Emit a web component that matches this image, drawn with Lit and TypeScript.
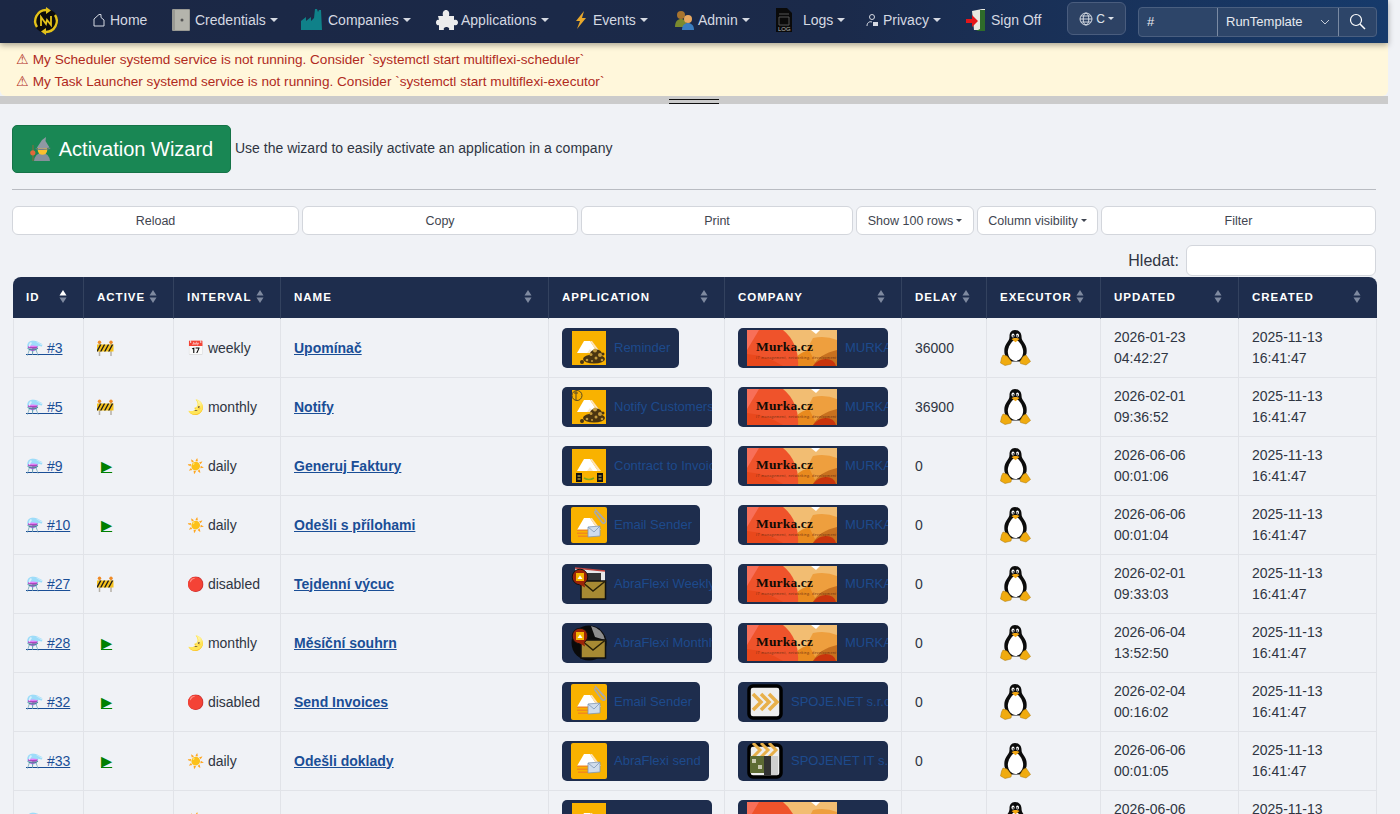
import { LitElement, html, css, svg } from 'lit';
import { customElement } from 'lit/decorators.js';

type Row = {
  id: number; active: boolean; interval: string; name: string;
  app: string; appIcon: string; appW: number;
  company: string; companyIcon: string;
  delay: string; updated: string[];
};

const MURKA = 'MURKA.CZ';
const rows: Row[] = [
  { id: 3, active: false, interval: 'weekly', name: 'Upomínač', app: 'Reminder', appIcon: 'coins', appW: 117, company: MURKA, companyIcon: 'murka', delay: '36000', updated: ['2026-01-23', '04:42:27'] },
  { id: 5, active: false, interval: 'monthly', name: 'Notify', app: 'Notify Customers', appIcon: 'notify', appW: 150, company: MURKA, companyIcon: 'murka', delay: '36900', updated: ['2026-02-01', '09:36:52'] },
  { id: 9, active: true, interval: 'daily', name: 'Generuj Faktury', app: 'Contract to Invoice', appIcon: 'contract', appW: 150, company: MURKA, companyIcon: 'murka', delay: '0', updated: ['2026-06-06', '00:01:06'] },
  { id: 10, active: true, interval: 'daily', name: 'Odešli s přílohami', app: 'Email Sender', appIcon: 'clip', appW: 138, company: MURKA, companyIcon: 'murka', delay: '0', updated: ['2026-06-06', '00:01:04'] },
  { id: 27, active: false, interval: 'disabled', name: 'Tejdenní výcuc', app: 'AbraFlexi Weekly', appIcon: 'weekly', appW: 150, company: MURKA, companyIcon: 'murka', delay: '0', updated: ['2026-02-01', '09:33:03'] },
  { id: 28, active: true, interval: 'monthly', name: 'Měsíční souhrn', app: 'AbraFlexi Monthly', appIcon: 'monthly', appW: 150, company: MURKA, companyIcon: 'murka', delay: '0', updated: ['2026-06-04', '13:52:50'] },
  { id: 32, active: true, interval: 'disabled', name: 'Send Invoices', app: 'Email Sender', appIcon: 'clip', appW: 138, company: 'SPOJE.NET s.r.o.', companyIcon: 'spoje', delay: '0', updated: ['2026-02-04', '00:16:02'] },
  { id: 33, active: true, interval: 'daily', name: 'Odešli doklady', app: 'AbraFlexi send', appIcon: 'send', appW: 147, company: 'SPOJENET IT s.r.o.', companyIcon: 'spojeit', delay: '0', updated: ['2026-06-06', '00:01:05'] },
  { id: 34, active: true, interval: 'daily', name: 'Import', app: 'AbraFlexi Import', appIcon: 'coins', appW: 150, company: MURKA, companyIcon: 'murka', delay: '0', updated: ['2026-06-06', '00:01:03'] },
];

const intervalEmoji: Record<string, string> = { weekly: '📅', monthly: '🌛', daily: '☀️', disabled: '🔴' };

const columns: [string, number][] = [
  ['ID', 71], ['ACTIVE', 90], ['INTERVAL', 107], ['NAME', 268], ['APPLICATION', 176],
  ['COMPANY', 177], ['DELAY', 85], ['EXECUTOR', 114], ['UPDATED', 138], ['CREATED', 138],
];

const abraA = svg`<path d="M6 23 13 11h6l8 12z" fill="#fff"/><path d="M19 11h2l9 12h-3z" fill="#fde3b8"/><path d="M16 23l3-4 3 4z" fill="#fbe9c9"/>`;
const coins = svg`<g fill="#4a3510"><ellipse cx="23" cy="29" rx="11" ry="4.500"/><ellipse cx="25" cy="24" rx="6" ry="4.500"/><circle cx="11" cy="32" r="2"/><circle cx="32" cy="24" r="1.500"/></g><g fill="#c29a3e"><circle cx="24" cy="20.500" r="2"/><circle cx="29" cy="25" r="2"/><circle cx="20" cy="24.500" r="1.500"/><circle cx="25" cy="28" r="1.500"/><circle cx="16" cy="30" r="1.300"/><circle cx="31" cy="30" r="1.300"/><circle cx="21" cy="31" r="1"/></g>`;
const mail = svg`<g fill="#f28a1c"><path d="M6 22.500h11v1.500H6zM6 25.500h11v1.500H6zM7 28.500h10v1.500H7z"/></g><path d="M17 20l12-1 0 10-12 1z" fill="#cfdcec" stroke="#7f97b5" stroke-width=".8"/><path d="M17 20l6 5 6-6" fill="none" stroke="#7f97b5" stroke-width=".8"/>`;
const clip = svg`<path d="M24 2l10 11c1.600 2.500-1.500 4-3 2.500L24 6c-1-1.500 .8-2.500 2-1.500l6 7" fill="none" stroke="#a8a8a8" stroke-width="1.500"/>`;
const envelope = svg`<rect x="10" y="15" width="24.500" height="18" fill="#a78a33" stroke="#111" stroke-width="1.500"/><path d="M10 15l12 10 12.500-10" fill="none" stroke="#2a2208" stroke-width="1.500"/>`;
const bubble = svg`<circle cx="9" cy="11" r="7.800" fill="#9c2408" stroke="#111" stroke-width="1"/><path d="M8 18l6 3.500-1-6z" fill="#9c2408"/><rect x="5" y="7" width="8" height="8" fill="#f5b301"/><path d="M6.500 13l2.500-3.500 2.500 3.500z" fill="#fff"/>`;

function appIcon(kind: string) {
  const square = svg`<rect x="1" y="1" width="34" height="34" fill="#f9b200"/>`;
  let body = svg``;
  if (kind === 'coins') body = svg`${square}${abraA}${coins}`;
  if (kind === 'notify') body = svg`${square}${abraA}${coins}<circle cx="6" cy="6.500" r="5" fill="none" stroke="#5a4a20"/><path d="M5 2v9M3 4h4" stroke="#5a4a20" fill="none"/>`;
  if (kind === 'contract') body = svg`${square}${abraA}<path d="M5 25h6v9H5zM26 25h6v9h-6z" fill="#111"/><path d="M6.500 28h3M6.500 31h3M27.500 28h3M27.500 31h3" stroke="#f5d04a"/><path d="M13 30q5 3 10 0" fill="none" stroke="#7da81e" stroke-width="1.600"/>`;
  if (kind === 'clip') body = svg`<rect x="0" y="0" width="36" height="36" rx="2" fill="#f9b200"/>${abraA}${mail}${clip}`;
  if (kind === 'send') body = svg`<rect x="0" y="0" width="36" height="36" rx="2" fill="#f9b200"/>${abraA}${mail}`;
  if (kind === 'weekly') body = svg`<path d="M4 2l30 3v12H6z" fill="#e8e8e8"/><path d="M4 2l30 3" stroke="#c0453f" stroke-width="1.500"/><path d="M16 7h14v8H16z" fill="#333"/>${envelope}${bubble}`;
  if (kind === 'monthly') body = svg`<circle cx="18" cy="18" r="17.500" fill="#0a0a0a"/><path d="M20 1a17 17 0 0 1 14 14l-10-3z" fill="#8c8c8c"/>${envelope}${bubble}`;
  return html`<svg class="logo" width="36" height="36" viewBox="0 0 36 36">${body}</svg>`;
}

function companyIcon(kind: string) {
  if (kind === 'murka') {
    return html`<svg class="banner" width="90" height="36" viewBox="0 0 90 36">
      <rect width="90" height="36" fill="#f2bd72"/>
      <path d="M66 8a40 40 0 0 1 24 2v26H51z" fill="#ee9f3e"/>
      <path d="M45 36q2-12 17-16l8 16z" fill="#e98a1e"/>
      <path d="M90 20v16H66q6-12 24-16z" fill="#c8711f"/>
      <path d="M66 36q5-7 13-7t10 7z" fill="#c9340c"/>
      <path d="M64 0h9l-4 4z" fill="#fff"/>
      <path d="M0 0h36a36 40 0 0 1 15 36H0z" fill="#ef532b"/>
      <path d="M0 0h12L0 20z" fill="#f86f58"/>
      <path d="M0 36V24q20 2 36 12z" fill="#e9481c"/>
      <text x="9" y="21" class="murka" textLength="57">Murka.cz</text>
      <text x="9" y="29" class="murka-sub" textLength="80">IT management, networking, development</text>
    </svg>`;
  }
  const chevrons = svg`<path d="M6 10l8 8-8 8M14 10l8 8-8 8M22 10l8 8-8 8" fill="none" stroke="#e8b04a" stroke-width="3.500"/>`;
  if (kind === 'spoje') {
    return html`<svg class="square" width="36" height="36" viewBox="0 0 36 36"><rect x="2" y="2" width="32" height="32" rx="4" fill="#eee" stroke="#000" stroke-width="3.500"/>${chevrons}</svg>`;
  }
  return html`<svg class="square" width="36" height="36" viewBox="0 0 36 36">
    <rect x="2" y="2" width="32" height="32" rx="4" fill="#eee" stroke="#000" stroke-width="3.500"/>
    <path d="M6-1l7 7-7 7M14-1l7 7-7 7M22-1l7 7-7 7" transform="translate(0 1)" fill="none" stroke="#e8b04a" stroke-width="3"/>
    <rect x="3" y="13" width="14" height="17" fill="#5d6b33"/><path d="M5 16h4v4H5zM11 22h4v4h-4z" fill="#c9c9b0"/>
    <rect x="17" y="13" width="14" height="19" fill="#cfcfcf"/><rect x="17" y="13" width="7" height="19" fill="#333"/>
  </svg>`;
}

const tux = html`<svg class="tux" width="32" height="38" viewBox="0 0 32 38">
  <path d="M15 1c-4 0-5.500 3-5.500 6.500 0 3-1 4-3 7-2 3-2.500 6-2 10l3 8h16l3-8c.5-4 0-7-2-10-2-3-3-4-3-7C21.500 4 19 1 15 1z" fill="#0c0c0c"/>
  <path d="M15.500 11c-3 0-6.500 5-7.500 10-1 6 3 11 7.500 11s8.500-5 7.500-11c-1-5-4.500-10-7.500-10z" fill="#fff"/>
  <ellipse cx="13" cy="6.500" rx="1.500" ry="2" fill="#fff"/><ellipse cx="17.500" cy="6.500" rx="1.500" ry="2" fill="#fff"/>
  <circle cx="13.300" cy="7" r=".8" fill="#000"/><circle cx="17.200" cy="7" r=".8" fill="#000"/>
  <path d="M11.500 10c2-1.500 6-1.500 8 0l-4 3.200z" fill="#f3a712"/>
  <path d="M3 26l4 1 4.500 5.500-.5 2.500-6 1.500L.5 34l1-5z" fill="#f0ab0f" stroke="#a87408" stroke-width=".5"/>
  <path d="M26 26l-3 1.500-3 5 .5 2 5.500 1.500 4.500-3.500-2-3z" fill="#f0ab0f" stroke="#a87408" stroke-width=".5"/>
</svg>`;

const barrier = html`<svg class="barrier" width="17" height="16" viewBox="0 0 17 16">
  <path d="M2.500 2v14M14 2v14" stroke="#b5b0a6" stroke-width="1.500"/>
  <circle cx="2.500" cy="2.200" r="1.700" fill="#f08a24"/><circle cx="14" cy="2.200" r="1.700" fill="#f08a24"/>
  <rect x="0" y="4.500" width="16.500" height="7" fill="#f6c21c"/>
  <path d="M0 10l3-5.500h1.500L.8 11.500H0zM3 11.500l3.800-7h1.500l-3.800 7zM7 11.500l3.800-7h1.500l-3.800 7zM11 11.500l3.800-7h1.500l-3.800 7z" fill="#1c1c1c"/>
</svg>`;

const wizard = html`<svg class="mage" width="22" height="24" viewBox="0 0 22 24">
  <path d="M4 24q1-8 8-8t8 8z" fill="#87909b"/>
  <path d="M3 8v16" stroke="#8a6a3c" stroke-width="1"/>
  <circle cx="12.500" cy="13" r="4.800" fill="#fbc02d"/>
  <path d="M7 10.500 12 3l4-3-.5 4 4 6.500q-6 2-12.500 .5z" fill="#8f98a3"/>
  <path d="M5.500 11q6.500 2.200 15 -.3l-.5 1.300q-7 2-14 .2z" fill="#737c87"/>
  <circle cx="2.800" cy="15.800" r="2.600" fill="#e2683a"/>
</svg>`;

const caret = html`<span class="caret"></span>`;

@customElement('app-root')
export class AppRoot extends LitElement {
  static styles = css`
    :host {
      display: block;
      height: 814px;
      overflow: hidden;
      background: #f0f2f6;
      font-family: 'Liberation Sans', Arial, sans-serif;
      font-size: 14px;
      color: #2f3542;
    }
    .page { width: 1388px; }
    nav {
      height: 43px;
      box-sizing: border-box;
      display: flex;
      align-items: center;
      padding-left: 31px;
      background: linear-gradient(90deg, #1b2744 0%, #1b2a4a 60%, #163a6b 100%);
      color: #dfe3ea;
      box-shadow: 0 2px 6px rgba(0, 0, 0, .35);
      position: relative;
      z-index: 2;
    }
    .brand { width: 30px; height: 28px; margin: 0 31px 2px 0; }
    .item { display: flex; align-items: center; white-space: nowrap; color: #d5d9e2; margin-bottom: 4px; }
    .item svg { flex: none; }
    .caret {
      display: inline-block;
      margin-left: 4px;
      border-top: 4px solid currentColor;
      border-left: 4px solid transparent;
      border-right: 4px solid transparent;
    }
    .lang {
      display: flex;
      align-items: center;
      justify-content: center;
      box-sizing: border-box;
      width: 59px;
      height: 33px;
      margin: -6px 0 0 13px;
      gap: 3px;
      font-size: 12px;
      border: 1px solid #4a5d7e;
      border-radius: 6px;
      background: #2d4264;
      color: #dfe3ea;
    }
    .lang .caret, .toolbar .caret { border-width: 3px 3px 0; margin-left: 3px; }
    .lang .caret { margin-left: 0; }
    .search {
      display: flex;
      box-sizing: border-box;
      width: 239px;
      height: 30px;
      margin-left: 12px;
      border: 1px solid #4a5f80;
      border-radius: 4px;
      background: #2d4569;
      font-size: 13px;
      color: #e6e9ef;
    }
    .search > div { display: flex; align-items: center; box-sizing: border-box; }
    .hash { width: 79px; padding-left: 8px; border-right: 1px solid #7a8aa3; }
    .sel { width: 121px; padding: 0 8px; justify-content: space-between; border-right: 1px solid #7a8aa3; }
    .mag { flex: 1; justify-content: center; }
    .alert {
      height: 53px;
      box-sizing: border-box;
      padding: 6px 16px 0;
      background: #fff7db;
      border-radius: 0 0 6px 6px;
      color: #b02a1d;
      font-size: 13.600px;
      line-height: 22px;
    }
    .divider {
      height: 8px;
      background: #cbcbcb;
      display: flex;
      justify-content: center;
    }
    .grip {
      width: 50px;
      height: 3px;
      margin-top: 3px;
      border-top: 1px solid #111;
      border-bottom: 1px solid #111;
    }
    main { padding: 21px 12px 0; }
    .wizard { display: flex; align-items: center; gap: 4px; }
    .wizard > span { margin-bottom: 2px; }
    .wizard button {
      box-sizing: border-box;
      display: flex;
      align-items: center;
      justify-content: center;
      gap: 7px;
      width: 219px;
      height: 48px;
      font: 20px 'Liberation Sans', Arial, sans-serif;
      color: #fff;
      background: #198754;
      border: 1px solid #157347;
      border-radius: 5px;
      padding: 0;
      white-space: nowrap;
    }
    .mage { flex: none; }
    hr { border: 0; border-top: 1px solid #b9bcc2; margin: 16px 0 16px; }
    .toolbar { display: flex; gap: 3px; }
    .toolbar div {
      box-sizing: border-box;
      height: 29px;
      display: flex;
      align-items: center;
      justify-content: center;
      background: #fff;
      border: 1px solid #d3d6dc;
      border-radius: 6px;
      font-size: 12.500px;
      color: #3f4550;
    }
    .filter { display: flex; justify-content: flex-end; align-items: center; gap: 7px; margin-top: 10px; font-size: 16px; }
    .filter span { color: #2f3542; }
    .filter div { width: 190px; height: 31px; box-sizing: border-box; background: #fff; border: 1px solid #d3d6dc; border-radius: 6px; }
    table { border-collapse: separate; border-spacing: 0; table-layout: fixed; width: 1364px; margin-top: 1px; margin-left: 1px; }
    th {
      height: 42px;
      padding: 0 16px 2px 13px;
      box-sizing: border-box;
      background: #1e2d4d;
      background-clip: padding-box;
      color: #fff;
      font-size: 11.500px;
      font-weight: 700;
      letter-spacing: 1px;
      text-align: left;
      border-right: 1px solid #33425f;
      border-bottom: 1px solid #f0f2f6;
    }
    th:first-child { border-top-left-radius: 8px; }
    th:last-child { border-top-right-radius: 8px; border-right: 0; }
    .th { display: flex; align-items: center; justify-content: space-between; white-space: nowrap; }
    td {
      height: 59px;
      box-sizing: border-box;
      padding: 0 13px;
      border-right: 1px solid #e1e3e8;
      border-bottom: 1px solid #e1e3e8;
      white-space: nowrap;
      line-height: 21px;
      background: #f0f2f6;
    }
    td:first-child { border-left: 1px solid #e1e3e8; padding-left: 12px; }
    a { color: #1a4e96; text-decoration: underline; }
    .name { font-weight: 700; }
    .play { color: #008000; font-family: 'DejaVu Sans', sans-serif; font-size: 14.500px; padding-left: 4px; }
    .barrier { display: block; }
    .tag {
      display: flex;
      align-items: center;
      box-sizing: border-box;
      height: 40px;
      background: #1e2d4d;
      border-radius: 5px;
      overflow: hidden;
      color: #1d4a8c;
      font-size: 13px;
      white-space: nowrap;
    }
    .tag span { margin-bottom: 2px; }
    .logo { margin: 0 7px 0 9px; flex: none; }
    .banner { margin: 0 8px 0 9px; flex: none; }
    .square { margin: 0 8px 0 9px; flex: none; }
    .murka { font: 700 13.500px 'Liberation Serif', serif; fill: #120b05; }
    .murka-sub { font: italic 3.400px 'Liberation Sans', sans-serif; fill: #6e2f12; }
    .tux { display: block; }
  `;

  navItem(label: string, icon: unknown, width: number, hasCaret = true) {
    return html`<div class="item" style="width:${width}px">${icon}<span>${label}</span>${hasCaret ? caret : ''}</div>`;
  }

  sortIcon(up = false) {
    return html`<svg width="8" height="15" viewBox="0 0 8 15" style="flex:none">
      <path d="M4 1l3.500 5.500h-7z" fill="${up ? '#fff' : '#7f8aa0'}"/><path d="M4 14l3.500-5.500h-7z" fill="#7f8aa0"/>
    </svg>`;
  }

  render() {
    const icons = {
      home: html`<svg width="14" height="14" viewBox="0 0 14 14" style="margin-right:4px"><path d="M2 13V6l5-4.500h2v3l3 2.500v6z" fill="none" stroke="#d5d9e2"/></svg>`,
      safe: html`<svg width="20" height="24" viewBox="0 0 20 24" style="margin-right:4px"><rect x="1" y="1" width="18" height="22" rx="1" fill="#9a9a94"/><rect x="4" y="2" width="14" height="20" fill="#b4b4ac"/><circle cx="11" cy="12" r="1.500" fill="#555"/></svg>`,
      factory: html`<svg width="24" height="22" viewBox="0 0 24 22" style="margin-right:3px"><path d="M0 21v-9l5-4v4l5-4v4l3-3 1-9h2l1 3 1-2h2l1 20z" fill="#0f8189"/></svg>`,
      puzzle: html`<svg width="22" height="22" viewBox="0 0 22 22" style="margin-right:3px"><path d="M2 7h5c-1-4 1-6 3-6s4 2 3 6h5v4c3-1 4 1 4 2.500S21 17 18 16v5h-5c1-2-1-3-2.500-3S7 19 8 21H3v-5c-2 1-3-1-3-2.500S1 10 3 11z" fill="#ececec"/></svg>`,
      bolt: html`<svg width="16" height="20" viewBox="0 0 16 20" style="margin-right:4px"><path d="M11 1 3 11h4l-3 8 9-11H9z" fill="#e8a82c"/></svg>`,
      people: html`<svg width="22" height="20" viewBox="0 0 22 20" style="margin-right:2px"><circle cx="7" cy="5" r="4" fill="#a8742e"/><path d="M1 17c0-6 3-8 6-8s6 2 6 8z" fill="#7a8a2e"/><circle cx="14" cy="9" r="4" fill="#e8a860"/><path d="M8 20c0-5 3-7 6-7s6 2 6 7z" fill="#3a7ec0"/></svg>`,
      log: html`<svg width="18" height="26" viewBox="0 0 18 26" style="margin-right:10px"><path d="M1 1h11l5 5v19H1z" fill="#0a0a0a"/><path d="M4 7h10M4 10h10v8H4z" fill="none" stroke="#555"/><text x="3" y="24" font-size="6" fill="#bbb" font-family="Liberation Sans">LOG</text></svg>`,
      privacy: html`<svg width="13" height="14" viewBox="0 0 13 14" style="margin-right:4px"><circle cx="6" cy="4" r="2.500" fill="none" stroke="#d5d9e2"/><path d="M1 13c0-3 2-5 5-4" fill="none" stroke="#d5d9e2"/><rect x="7" y="9" width="5" height="4" fill="#d5d9e2"/></svg>`,
      door: html`<svg width="22" height="24" viewBox="0 0 22 24" style="margin-right:4px"><path d="M7 3 17 1h3v21H9z" fill="#e8e8e0"/><path d="M15 2h5v21h-9l4-2z" fill="#2e6b2a"/><path d="M1 11h6V7l6 6-6 6v-4H1z" fill="#e3161a"/></svg>`,
    };
    return html`<div class="page">
      <nav>
        <svg class="brand" viewBox="0 0 30 28">
          <circle cx="15" cy="14" r="12" fill="#0c0c0c"/>
          <g fill="none" stroke="#e3c21b" stroke-width="2.400">
            <path d="M6 20A11 11 0 0 1 15 3"/><path d="M24 8a11 11 0 0 1-9 17"/>
          </g>
          <path d="M15 0l5 3.500-5 3.500zM15 28l-5-3.500 5-3.500z" fill="#e3c21b"/>
          <path d="M10 19V10l5 7 1-4 4 5V9" fill="none" stroke="#e3c21b" stroke-width="1.800"/>
        </svg>
        ${this.navItem('Home', icons.home, 79, false)}
        ${this.navItem('Credentials', icons.safe, 130)}
        ${this.navItem('Companies', icons.factory, 135)}
        ${this.navItem('Applications', icons.puzzle, 137)}
        ${this.navItem('Events', icons.bolt, 101)}
        ${this.navItem('Admin', icons.people, 101)}
        ${this.navItem('Logs', icons.log, 91)}
        ${this.navItem('Privacy', icons.privacy, 99)}
        ${this.navItem('Sign Off', icons.door, 89, false)}
        <div class="lang">
          <svg width="14" height="14" viewBox="0 0 14 14"><g fill="none" stroke="#dfe3ea" stroke-width=".9"><circle cx="7" cy="7" r="6"/><ellipse cx="7" cy="7" rx="2.800" ry="6"/><path d="M1 7h12M2 4h10M2 10h10"/></g></svg>
          <span>C</span>${caret}
        </div>
        <div class="search">
          <div class="hash">#</div>
          <div class="sel"><span>RunTemplate</span><svg width="10" height="6" viewBox="0 0 10 6"><path d="M1 1l4 4 4-4" fill="none" stroke="#c5ccd8"/></svg></div>
          <div class="mag"><svg width="17" height="17" viewBox="0 0 17 17"><circle cx="7" cy="7" r="5.500" fill="none" stroke="#fff" stroke-width="1.200"/><path d="M11 11l5 5" stroke="#fff" stroke-width="1.500"/></svg></div>
        </div>
      </nav>
      <div class="alert">
        <div>⚠ My Scheduler systemd service is not running. Consider \`systemctl start multiflexi-scheduler\`</div>
        <div>⚠ My Task Launcher systemd service is not running. Consider \`systemctl start multiflexi-executor\`</div>
      </div>
      <div class="divider"><div class="grip"></div></div>
      <main>
        <div class="wizard">
          <button>${wizard}<span>Activation Wizard</span></button>
          <span>Use the wizard to easily activate an application in a company</span>
        </div>
        <hr />
        <div class="toolbar">
          <div style="width:287px">Reload</div>
          <div style="width:276px">Copy</div>
          <div style="width:272px">Print</div>
          <div style="width:118px">Show 100 rows${caret}</div>
          <div style="width:121px">Column visibility${caret}</div>
          <div style="width:275px">Filter</div>
        </div>
        <div class="filter"><span>Hledat:</span><div></div></div>
        <table>
          <colgroup>${columns.map(([, w]) => html`<col style="width:${w}px" />`)}</colgroup>
          <thead>
            <tr>${columns.map(([c], i) => html`<th><div class="th"><span>${c}</span>${this.sortIcon(i === 0)}</div></th>`)}</tr>
          </thead>
          <tbody>
            ${rows.map((r) => html`<tr>
              <td><a href="#">⚗️ #${r.id}</a></td>
              <td>${r.active ? html`<a class="play" href="#">▶\uFE0E</a>` : barrier}</td>
              <td>${intervalEmoji[r.interval]} ${r.interval}</td>
              <td><a class="name" href="#">${r.name}</a></td>
              <td><div class="tag" style="width:${r.appW}px">${appIcon(r.appIcon)}<span>${r.app}</span></div></td>
              <td><div class="tag" style="width:150px">${companyIcon(r.companyIcon)}<span>${r.company}</span></div></td>
              <td>${r.delay}</td>
              <td>${tux}</td>
              <td>${r.updated[0]}<br />${r.updated[1]}</td>
              <td>2025-11-13<br />16:41:47</td>
            </tr>`)}
          </tbody>
        </table>
      </main>
    </div>`;
  }
}
